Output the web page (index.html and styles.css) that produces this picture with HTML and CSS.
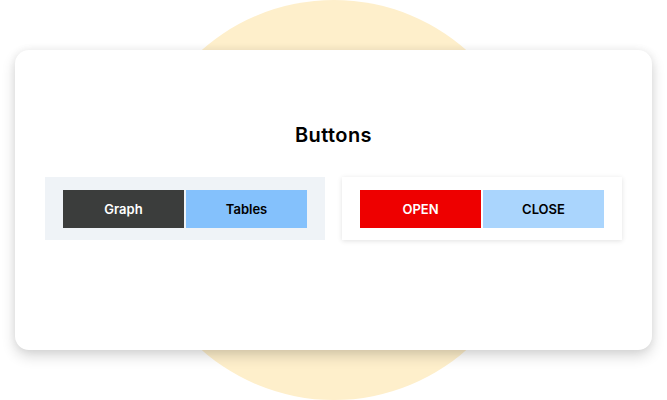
FILE: index.html
```html
<!DOCTYPE html>
<html>
<head>
<meta charset="utf-8">
<link rel="stylesheet" href="styles.css">
</head>
<body>
<div class="stage">
  <div class="blob"></div>
  <div class="card">
    <h1 class="title">Buttons</h1>
    <div class="groups">
      <div class="group group-muted">
        <button class="btn btn-dark">Graph</button>
        <button class="btn btn-blue">Tables</button>
      </div>
      <div class="group group-raised">
        <button class="btn btn-red">OPEN</button>
        <button class="btn btn-pale">CLOSE</button>
      </div>
    </div>
  </div>
</div>
</body>
</html>
```

FILE: styles.css
```css
html, body {
  margin: 0;
  padding: 0;
  background: #ffffff;
}
body {
  width: 667px;
  height: 400px;
  overflow: hidden;
  font-family: Inter, "Open Sans", sans-serif;
}
.stage {
  position: relative;
  width: 667px;
  height: 400px;
  padding: 50px 15px;
  box-sizing: border-box;
}
.blob {
  position: absolute;
  left: 134px;
  top: 0;
  width: 400px;
  height: 400px;
  border-radius: 50%;
  background: #feefcb;
}
.card {
  position: relative;
  height: 300px;
  background: #ffffff;
  border-radius: 14px;
  box-shadow: 0 6px 14px rgba(0, 0, 0, 0.16), 0 0 8px rgba(0, 0, 0, 0.06);
  padding: 72px 30px 0;
  box-sizing: border-box;
}
.title {
  margin: 0;
  text-align: center;
  font-size: 20px;
  font-weight: 600;
  line-height: 26px;
  color: #000;
  letter-spacing: 0.4px;
}
.groups {
  display: flex;
  gap: 17px;
  margin-top: 29px;
}
.group {
  flex: 1;
  height: 63px;
  box-sizing: border-box;
  padding: 13px 18px 12px;
  display: flex;
  gap: 2px;
}
.group-muted {
  background: #eff3f7;
}
.group-raised {
  background: #ffffff;
  box-shadow: 0 1px 5px rgba(0, 0, 0, 0.12);
}
.btn {
  flex: 1;
  border: none;
  margin: 0;
  padding: 0;
  height: 38px;
  font-family: Inter, "Open Sans", sans-serif;
  font-size: 13px;
  font-weight: 600;
  cursor: pointer;
}
.btn-dark { background: #3b3d3c; color: #ffffff; }
.btn-blue { background: #84c1fc; color: #000000; }
.btn-red { background: #ee0000; color: #ffffff; }
.btn-pale { background: #aad5fd; color: #000000; }
```
